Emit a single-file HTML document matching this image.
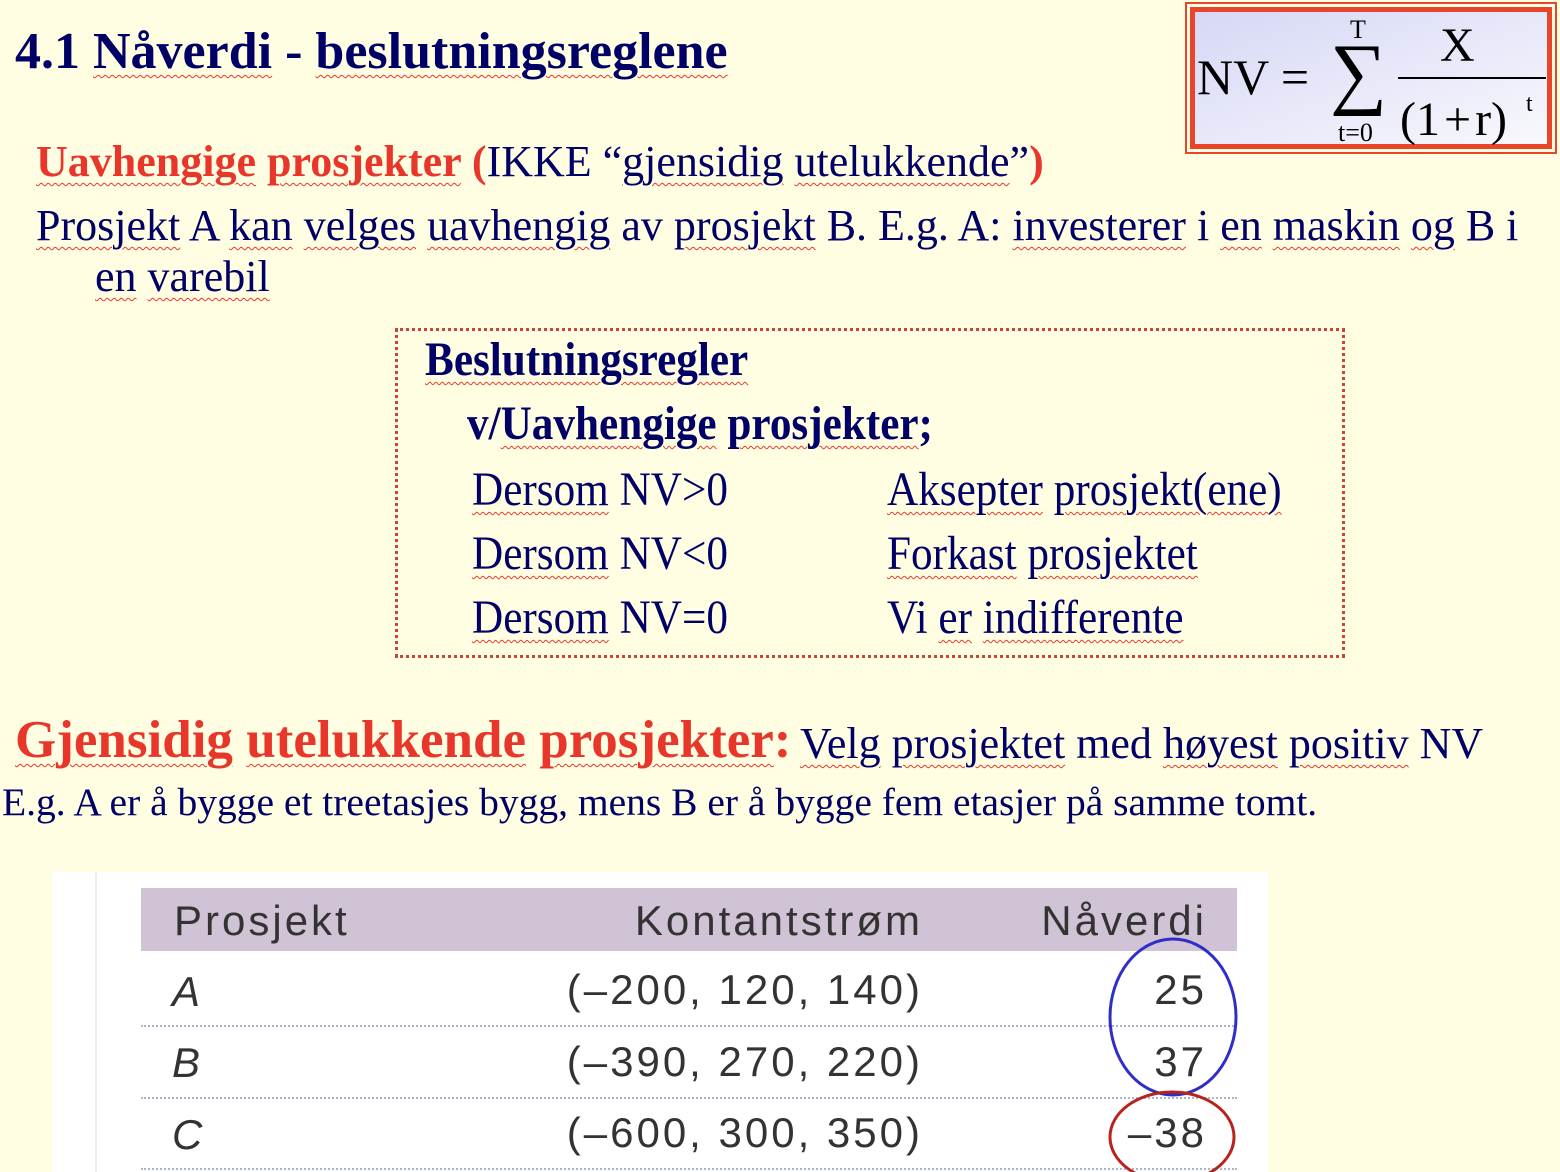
<!DOCTYPE html>
<html><head><meta charset="utf-8"><style>
body{margin:0;width:1560px;height:1172px;background:#fffee3;position:relative;overflow:hidden;font-family:"Liberation Serif",serif;color:#000066}
.t{position:absolute;white-space:nowrap;line-height:1}
.w{text-decoration:underline wavy #e8362a;text-decoration-thickness:1px;text-underline-offset:6px}
.r{color:#e8362a}
.c{transform:scaleX(0.9);transform-origin:left}
.s{font-family:"Liberation Sans",sans-serif;color:#333;font-size:42px;letter-spacing:3px}
</style></head><body>
<div class="t" style="left:15px;top:26px;font-size:52px;font-weight:bold">4.1 <span class="w">Nåverdi</span> - <span class="w">beslutningsreglene</span></div>

<div style="position:absolute;left:1185px;top:2px;width:372px;height:152px;border:2px solid #e8452a;box-sizing:border-box"></div>
<div style="position:absolute;left:1190px;top:7px;width:362px;height:142px;border:5px solid #e8452a;box-sizing:border-box;background:linear-gradient(160deg,#d6d8f6,#f8f8fc)"></div>
<div class="t" style="left:1197px;top:52px;font-size:50px;color:#000">NV = </div>
<div class="t" style="left:1330px;top:33px;font-size:80px;color:#000">∑</div>
<div class="t" style="left:1350px;top:17px;font-size:26px;color:#000">T</div>
<div class="t" style="left:1338px;top:120px;font-size:26px;color:#000">t=0</div>
<div class="t" style="left:1440px;top:22px;font-size:48px;color:#000">X</div>
<div style="position:absolute;left:1398px;top:77px;width:148px;height:2px;background:#000"></div>
<div class="t" style="left:1400px;top:96px;font-size:48px;color:#000">(1<span style="margin:0 4px">+</span>r)</div>
<div class="t" style="left:1526px;top:92px;font-size:24px;color:#000">t</div>

<div class="t" style="left:36px;top:140px;font-size:44px"><span class="r w" style="font-weight:bold">Uavhengige</span><span class="r" style="font-weight:bold"> </span><span class="r w" style="font-weight:bold">prosjekter</span><span class="r" style="font-weight:bold"> (</span>IKKE “<span class="w">gjensidig</span> <span class="w">utelukkende</span>”<span class="r" style="font-weight:bold">)</span></div>
<div class="t" style="left:36px;top:204px;font-size:44px"><span class="w">Prosjekt</span> A <span class="w">kan</span> <span class="w">velges</span> <span class="w">uavhengig</span> av <span class="w">prosjekt</span> B. E.g. A: <span class="w">investerer</span> i <span class="w">en</span> <span class="w">maskin</span> <span class="w">og</span> B i</div>
<div class="t" style="left:95px;top:255px;font-size:44px"><span class="w">en</span> <span class="w">varebil</span></div>

<div style="position:absolute;left:395px;top:328px;width:950px;height:330px;border:3px dotted #c8453a;box-sizing:border-box"></div>
<div class="t c" style="left:425px;top:336px;font-size:48px;font-weight:bold"><span class="w">Beslutningsregler</span></div>
<div class="t c" style="left:467px;top:400px;font-size:48px;font-weight:bold">v/<span class="w">Uavhengige</span> <span class="w">prosjekter</span>;</div>
<div class="t c" style="left:472px;top:466px;font-size:48px"><span class="w">Dersom</span> NV&gt;0</div>
<div class="t c" style="left:472px;top:530px;font-size:48px"><span class="w">Dersom</span> NV&lt;0</div>
<div class="t c" style="left:472px;top:594px;font-size:48px"><span class="w">Dersom</span> NV=0</div>
<div class="t c" style="left:887px;top:466px;font-size:48px"><span class="w">Aksepter</span> <span class="w">prosjekt(ene)</span></div>
<div class="t c" style="left:887px;top:530px;font-size:48px"><span class="w">Forkast</span> <span class="w">prosjektet</span></div>
<div class="t c" style="left:887px;top:594px;font-size:48px">Vi <span class="w">er</span> <span class="w">indifferente</span></div>

<div class="t" style="left:15px;top:714px;font-size:53px;font-weight:bold;color:#e8362a"><span class="w">Gjensidig</span> <span class="w">utelukkende</span> <span class="w">prosjekter</span>:</div>
<div class="t" style="left:800px;top:722px;font-size:44px"><span class="w">Velg</span> <span class="w">prosjektet</span> med <span class="w">høyest</span> <span class="w">positiv</span> NV</div>
<div class="t" style="left:2px;top:783px;font-size:39.5px">E.g. A er å bygge et treetasjes bygg, mens B er å bygge fem etasjer på samme tomt.</div>

<div style="position:absolute;left:52px;top:872px;width:1216px;height:300px;background:#fff"></div>
<div style="position:absolute;left:95px;top:872px;width:2px;height:300px;background:#eee"></div>
<div style="position:absolute;left:141px;top:888px;width:1096px;height:63px;background:#cfc3d5"></div>
<div style="position:absolute;left:141px;top:1025px;width:1096px;border-top:2px dotted #a9b6cc"></div>
<div style="position:absolute;left:141px;top:1097px;width:1096px;border-top:2px dotted #a9b6cc"></div>
<div style="position:absolute;left:141px;top:1168px;width:1096px;border-top:2px dotted #a9b6cc"></div>
<div class="t s" style="left:174px;top:900px">Prosjekt</div>
<div class="t s" style="left:420px;top:900px;width:503px;text-align:right">Kontantstrøm</div>
<div class="t s" style="left:900px;top:900px;width:307px;text-align:right">Nåverdi</div>
<div class="t s" style="left:172px;top:971px;font-style:italic">A</div>
<div class="t s" style="left:172px;top:1042px;font-style:italic">B</div>
<div class="t s" style="left:172px;top:1114px;font-style:italic">C</div>
<div class="t s" style="left:420px;top:969px;width:503px;text-align:right">(–200, 120, 140)</div>
<div class="t s" style="left:420px;top:1041px;width:503px;text-align:right">(–390, 270, 220)</div>
<div class="t s" style="left:420px;top:1112px;width:503px;text-align:right">(–600, 300, 350)</div>
<div class="t s" style="left:900px;top:969px;width:307px;text-align:right">25</div>
<div class="t s" style="left:900px;top:1041px;width:307px;text-align:right">37</div>
<div class="t s" style="left:900px;top:1112px;width:307px;text-align:right">–38</div>
<svg style="position:absolute;left:0;top:0" width="1560" height="1172">
<ellipse cx="1173" cy="1017" rx="63" ry="78" fill="none" stroke="#2f2fc8" stroke-width="3"/>
<ellipse cx="1172" cy="1137" rx="62" ry="45" fill="none" stroke="#b8231c" stroke-width="3"/>
</svg>
</body></html>
